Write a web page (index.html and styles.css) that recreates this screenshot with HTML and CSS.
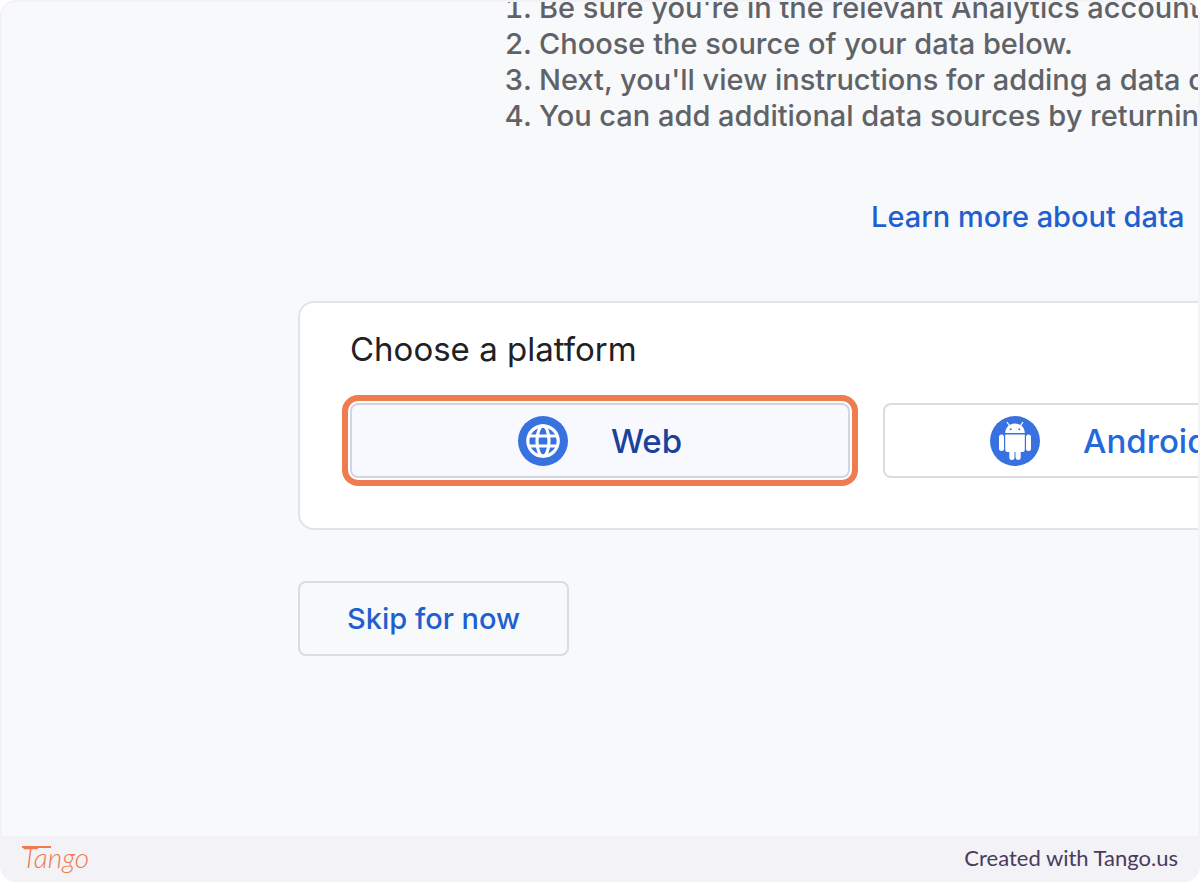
FILE: index.html
```html
<!DOCTYPE html>
<html lang="en">
<head>
  <title>Start collecting data</title>
  <meta charset="utf-8">
  <meta name="viewport" content="width=device-width, initial-scale=1">
  <link rel="stylesheet" href="styles.css">
</head>
<body>
  <div class="frame">
    <main class="content">
      <ol class="steps">
        <li>Be sure you're in the relevant Analytics account</li>
        <li>Choose the source of your data below.</li>
        <li>Next, you'll view instructions for adding a data collection</li>
        <li>You can add additional data sources by returning</li>
      </ol>
      <a class="learn-more" href="#">Learn more about data</a>

      <section class="card">
        <h1 class="card-title">Choose a platform</h1>
        <div class="platforms">
          <button class="platform platform-active" type="button">
            <svg class="platform-icon" viewBox="0 0 50 50" aria-hidden="true">
              <circle cx="25" cy="25" r="25" fill="#3871e0"/>
              <g fill="none" stroke="#fff" stroke-width="3.2">
                <circle cx="25" cy="25" r="15.2"/>
                <ellipse cx="25" cy="25" rx="6" ry="15.2"/>
                <path d="M11 20h28M11 30h28"/>
              </g>
            </svg>
            <span>Web</span>
          </button>
          <button class="platform" type="button">
            <svg class="platform-icon" viewBox="0 0 50 50" aria-hidden="true">
              <circle cx="25" cy="25" r="25" fill="#3871e0"/>
              <g fill="#fff">
                <path d="M15.2 17c0-4.100 2-6.700 4.800-8.200a10.500 10.500 0 0 1 10 0c2.800 1.500 4.800 4.100 4.800 8.200z"/>
                <path d="M15.200 18.500h19.600v15.200a2.300 2.300 0 0 1-2.300 2.300h-1.800v5.300a2.600 2.600 0 0 1-5.200 0V36h-1v5.300a2.600 2.600 0 0 1-5.200 0V36h-1.800a2.300 2.300 0 0 1-2.300-2.300z"/>
                <rect x="9" y="18.500" width="5" height="16.500" rx="2.500"/>
                <rect x="36" y="18.500" width="5" height="16.500" rx="2.500"/>
              </g>
              <path d="M17.300 6.500l2.700 4M32.700 6.500l-2.700 4" stroke="#fff" stroke-width="1.300" stroke-linecap="round"/>
              <circle cx="20.700" cy="13.300" r="1" fill="#3871e0"/>
              <circle cx="29.300" cy="13.300" r="1" fill="#3871e0"/>
            </svg>
            <span>Android app</span>
          </button>
        </div>
      </section>

      <button class="skip" type="button">Skip for now</button>
    </main>
    <footer class="footer">
      <span class="logo">Tango</span>
      <span>Created with Tango.us</span>
    </footer>
  </div>
</body>
</html>
```
FILE: styles.css
```css
* {
  box-sizing: border-box;
}

body {
  background-color: #ffffff;
  font-family: Inter, "Liberation Sans", sans-serif;
  margin: 0;
}

button {
  background: none;
  border: 2px solid #dadce0;
  border-radius: 8px;
  cursor: pointer;
  font-family: inherit;
  font-weight: 500;
  height: 75px;
}

.frame {
  background-color: #f3f2f7;
  border-radius: 16px;
  display: flex;
  flex-direction: column;
  min-height: 100vh;
  padding: 2px 2px 0;
}

.content {
  align-items: flex-start;
  background-color: #f8f9fb;
  border-radius: 12px 12px 0 0;
  display: flex;
  flex: 1;
  flex-direction: column;
  overflow: hidden;
  padding-left: 296px;
  white-space: nowrap;
}

.steps {
  color: #5f6368;
  font-size: 29px;
  font-weight: 500;
  line-height: 36px;
  margin: -12px 0 0;
  padding-left: 241px;
}

.learn-more {
  color: #1f5fd0;
  font-size: 29px;
  font-weight: 500;
  line-height: 36px;
  margin: 65px 0 0 573px;
  text-decoration: none;
}

.card {
  background-color: #ffffff;
  border: 2px solid #e2e3e5;
  border-radius: 16px;
  margin-bottom: 51px;
  margin-top: 66px;
  padding: 26px 50px 50px;
}

.card-title {
  color: #202124;
  font-size: 33px;
  font-weight: 400;
  line-height: 40px;
  margin: 0 0 34px;
}

.platforms {
  display: grid;
  gap: 33px;
  grid-template-columns: repeat(2, 500px);
}

.platform {
  align-items: center;
  color: #2468dc;
  display: flex;
  font-size: 33px;
  gap: 43px;
  justify-content: center;
}

.platform-active {
  background-color: #f8f9ff;
  border-color: #d0d5e0;
  box-shadow: 0 0 0 2px #ffffff, 0 0 0 8px #ef7c51;
  color: #1b429b;
}

.platform-icon {
  height: 50px;
  width: 50px;
}

.skip {
  color: #1f5fd0;
  font-size: 29px;
  padding: 0 47px;
}

.footer {
  align-items: center;
  color: #493b5c;
  display: flex;
  font-family: Lato, sans-serif;
  font-size: 22px;
  height: 46px;
  justify-content: space-between;
  padding: 0 20px 4px;
}

.logo {
  color: #ef7c51;
  font-size: 28px;
  font-style: italic;
  font-weight: 300;
  line-height: 32px;
  position: relative;
}

/* long crossbar of the wordmark */
.logo::before {
  background-color: #ef7c51;
  content: "";
  height: 2px;
  left: 0;
  position: absolute;
  top: 5px;
  width: 29px;
}
```
